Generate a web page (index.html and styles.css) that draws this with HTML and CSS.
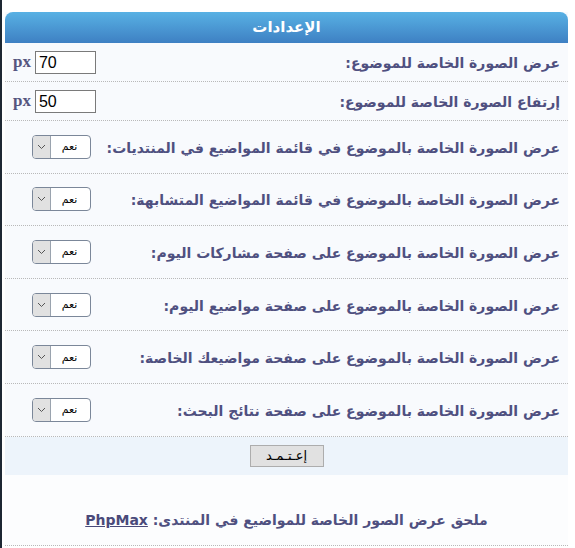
FILE: index.html
```html
<!DOCTYPE html>
<html lang="ar" dir="rtl">
<head>
<meta charset="utf-8">
<title>الإعدادات</title>
<link rel="stylesheet" href="styles.css">
</head>
<body>
<div class="page">
  <div class="panel">
    <div class="panel-head">الإعدادات</div>
    <div class="row row-short">
      <span class="label">عرض الصورة الخاصة للموضوع:</span>
      <span class="ctrl"><span class="num">70</span><span class="unit">px</span></span>
    </div>
    <div class="row row-short">
      <span class="label">إرتفاع الصورة الخاصة للموضوع:</span>
      <span class="ctrl"><span class="num">50</span><span class="unit">px</span></span>
    </div>
    <div class="row row-tall">
      <span class="label">عرض الصورة الخاصة بالموضوع في قائمة المواضيع في المنتديات:</span>
      <span class="select"><span class="select-val">نعم</span><span class="select-arrow"><svg width="9" height="6" viewBox="0 0 9 6"><path d="M1 1 L4.5 4.5 L8 1" fill="none" stroke="#555" stroke-width="1"/></svg></span></span>
    </div>
    <div class="row row-tall">
      <span class="label">عرض الصورة الخاصة بالموضوع في قائمة المواضيع المتشابهة:</span>
      <span class="select"><span class="select-val">نعم</span><span class="select-arrow"><svg width="9" height="6" viewBox="0 0 9 6"><path d="M1 1 L4.5 4.5 L8 1" fill="none" stroke="#555" stroke-width="1"/></svg></span></span>
    </div>
    <div class="row row-tall">
      <span class="label">عرض الصورة الخاصة بالموضوع على صفحة مشاركات اليوم:</span>
      <span class="select"><span class="select-val">نعم</span><span class="select-arrow"><svg width="9" height="6" viewBox="0 0 9 6"><path d="M1 1 L4.5 4.5 L8 1" fill="none" stroke="#555" stroke-width="1"/></svg></span></span>
    </div>
    <div class="row row-tall">
      <span class="label">عرض الصورة الخاصة بالموضوع على صفحة مواضيع اليوم:</span>
      <span class="select"><span class="select-val">نعم</span><span class="select-arrow"><svg width="9" height="6" viewBox="0 0 9 6"><path d="M1 1 L4.5 4.5 L8 1" fill="none" stroke="#555" stroke-width="1"/></svg></span></span>
    </div>
    <div class="row row-tall">
      <span class="label">عرض الصورة الخاصة بالموضوع على صفحة مواضيعك الخاصة:</span>
      <span class="select"><span class="select-val">نعم</span><span class="select-arrow"><svg width="9" height="6" viewBox="0 0 9 6"><path d="M1 1 L4.5 4.5 L8 1" fill="none" stroke="#555" stroke-width="1"/></svg></span></span>
    </div>
    <div class="row row-tall">
      <span class="label">عرض الصورة الخاصة بالموضوع على صفحة نتائج البحث:</span>
      <span class="select"><span class="select-val">نعم</span><span class="select-arrow"><svg width="9" height="6" viewBox="0 0 9 6"><path d="M1 1 L4.5 4.5 L8 1" fill="none" stroke="#555" stroke-width="1"/></svg></span></span>
    </div>
    <div class="submit-row">
      <span class="btn">إعـتـمـد</span>
    </div>
    <div class="footer">
      <span class="footer-text">ملحق عرض الصور الخاصة للمواضيع في المنتدى: <a class="link">PhpMax</a></span>
    </div>
  </div>
</div>
</body>
</html>
```

FILE: styles.css
```css
html, body {
  margin: 0;
  padding: 0;
  background: #ffffff;
}
.page {
  box-sizing: border-box;
  width: 575px;
  min-height: 548px;
  border-left: 2px solid #1d2733;
  padding: 12px 7px 0 3px;
  font-family: "DejaVu Sans", sans-serif;
}
.panel {
  background: #f8fafd;
}
.panel-head {
  height: 31px;
  line-height: 30px;
  border-radius: 8px 8px 0 0;
  background: linear-gradient(to bottom, #58b1e4, #3e80c3);
  color: #ffffff;
  font-weight: bold;
  font-size: 15px;
  text-align: center;
}
.row {
  display: flex;
  justify-content: space-between;
  align-items: center;
  border-bottom: 1px dotted #b9b9b9;
  padding: 0 8px;
  color: #4f5080;
  font-size: 14px;
  font-weight: bold;
}
.row-short {
  height: 38px;
}
.row-tall {
  height: 51.6px;
}
.label {
  white-space: nowrap;
  padding-top: 2px;
}
.ctrl {
  display: flex;
  align-items: center;
  gap: 4px;
}
.num {
  box-sizing: border-box;
  width: 61px;
  height: 23px;
  border: 1px solid #7a7a7a;
  background: #ffffff;
  color: #000000;
  font-family: "Liberation Sans", sans-serif;
  font-size: 16px;
  font-weight: normal;
  line-height: 21px;
  padding: 0 3px;
  direction: ltr;
  text-align: left;
}
.unit {
  font-family: "Liberation Serif", serif;
  font-size: 17px;
  font-weight: bold;
  color: #55557f;
}
.select {
  box-sizing: border-box;
  display: flex;
  width: 59px;
  height: 24px;
  margin-left: 19px;
  border: 1px solid #7b8799;
  border-radius: 4px;
  background: #ffffff;
  overflow: hidden;
}
.select-val {
  flex: 1;
  display: flex;
  align-items: center;
  justify-content: center;
  color: #000000;
  font-size: 11px;
  font-weight: normal;
  padding-right: 2px;
}
.select-arrow {
  width: 17px;
  display: flex;
  align-items: center;
  justify-content: center;
  background: #e1e1e1;
  border-right: 1px solid #9aa3ae;
}
.submit-row {
  height: 38px;
  background: #edf4fb;
  display: flex;
  align-items: center;
  justify-content: center;
}
.btn {
  box-sizing: border-box;
  width: 74px;
  height: 22px;
  border: 1px solid #adadad;
  background: #e1e1e1;
  color: #000000;
  font-family: "DejaVu Sans", serif;
  font-size: 13px;
  font-weight: normal;
  display: flex;
  align-items: center;
  justify-content: center;
}
.footer {
  height: 70px;
  background: #fcfdfe;
  border-bottom: 1px dotted #b9b9b9;
  display: flex;
  align-items: flex-end;
  justify-content: center;
  color: #4f5080;
  font-size: 14px;
  font-weight: bold;
}
.footer-text {
  margin-bottom: 17px;
}
.link {
  color: #4a4a7a;
  text-decoration: underline;
  font-family: "DejaVu Sans", sans-serif;
  font-size: 14px;
  font-weight: bold;
}
```
